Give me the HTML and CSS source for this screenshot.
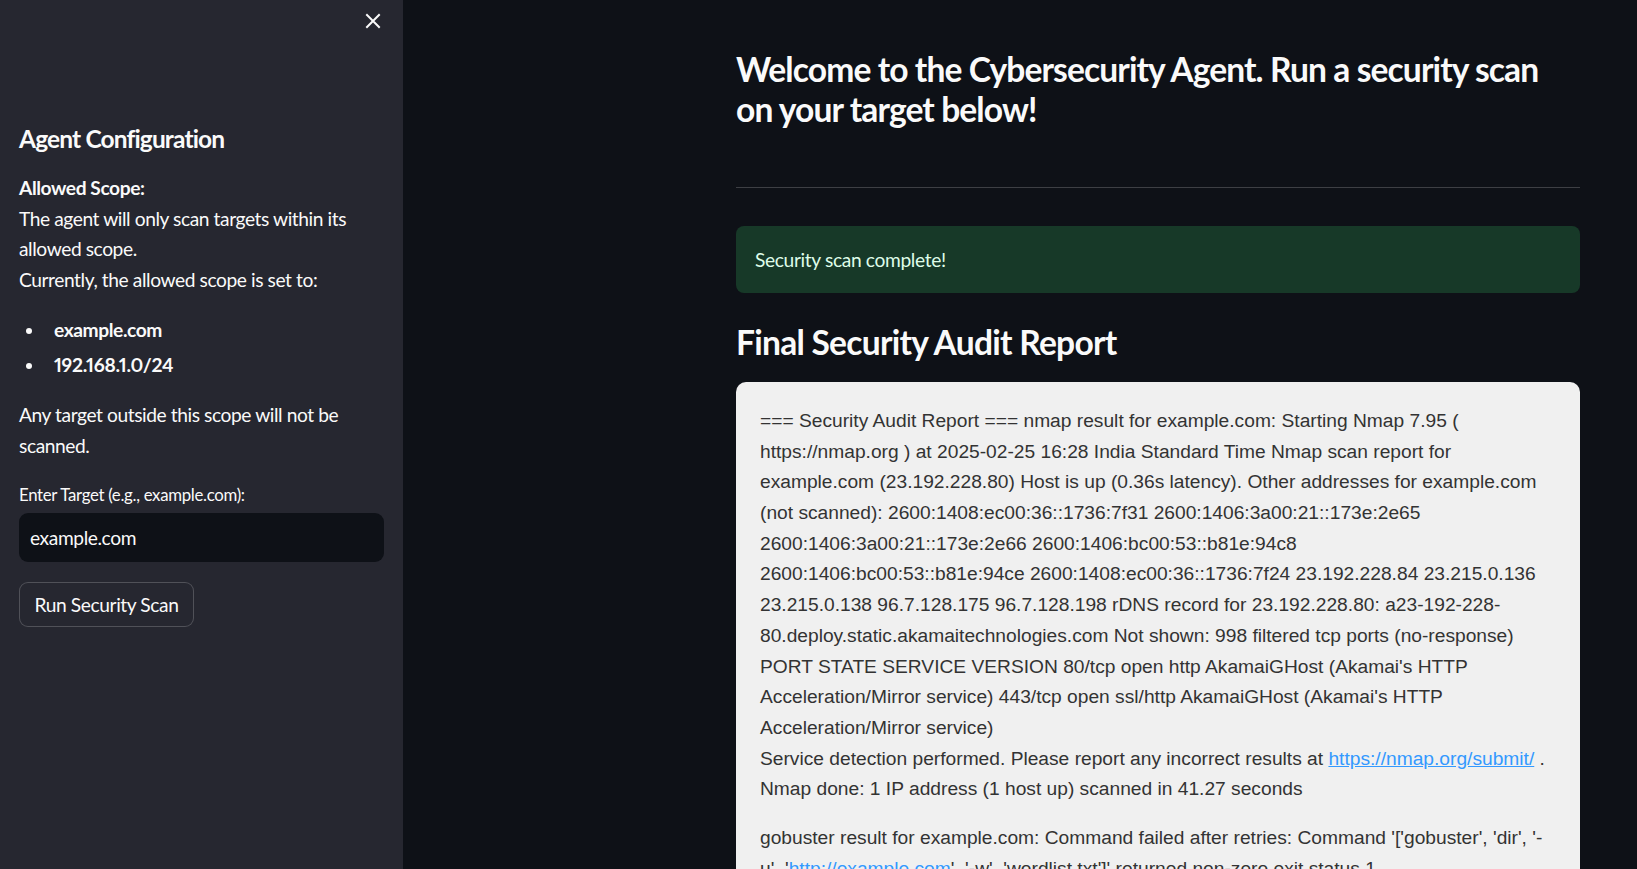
FILE: index.html
```html
<!DOCTYPE html>
<html lang="en">
<head>
<meta charset="utf-8">
<title>Cybersecurity Agent</title>
<link rel="stylesheet" href="styles.css">
</head>
<body>
<div class="app">
  <aside class="sidebar">
    <div class="sidebar-head">
      <button class="close-btn" aria-label="Close sidebar">
        <svg width="16" height="16" viewBox="0 0 16 16"><path d="M2 2 L14 14 M14 2 L2 14" stroke="#fafafa" stroke-width="2" stroke-linecap="square"/></svg>
      </button>
    </div>
    <div class="sidebar-body">
      <h2 class="side-title">Agent Configuration</h2>
      <p class="side-text"><strong>Allowed Scope:</strong><br>The agent will only scan targets within its allowed scope.<br>Currently, the allowed scope is set to:</p>
      <ul class="scope-list">
        <li><strong>example.com</strong></li>
        <li><strong class="num">192.168.1.0/24</strong></li>
      </ul>
      <p class="side-text">Any target outside this scope will not be scanned.</p>
      <label class="field-label" for="target">Enter Target (e.g., example.com):</label>
      <div class="input-wrap"><input id="target" class="text-input" type="text" value="example.com"></div>
      <button class="run-btn">Run Security Scan</button>
    </div>
  </aside>
  <main class="main">
    <div class="block">
      <h3 class="title">Welcome to the Cybersecurity Agent. Run a security scan on your target below!</h3>
      <hr class="divider">
      <div class="alert-success">Security scan complete!</div>
      <h3 class="report-title">Final Security Audit Report</h3>
      <div class="report">
        <p class="report-p">=== Security Audit Report === nmap result for example.com: Starting Nmap 7.95 ( https://nmap.org ) at 2025-02-25 16:28 India Standard Time Nmap scan report for example.com (23.192.228.80) Host is up (0.36s latency). Other addresses for example.com (not scanned): 2600:1408:ec00:36::1736:7f31 2600:1406:3a00:21::173e:2e65 2600:1406:3a00:21::173e:2e66 2600:1406:bc00:53::b81e:94c8 2600:1406:bc00:53::b81e:94ce 2600:1408:ec00:36::1736:7f24 23.192.228.84 23.215.0.136 23.215.0.138 96.7.128.175 96.7.128.198 rDNS record for 23.192.228.80: a23-192-228-80.deploy.static.akamaitechnologies.com Not shown: 998 filtered tcp ports (no-response) PORT STATE SERVICE VERSION 80/tcp open http AkamaiGHost (Akamai's HTTP Acceleration/Mirror service) 443/tcp open ssl/http AkamaiGHost (Akamai's HTTP Acceleration/Mirror service)<br>Service detection performed. Please report any incorrect results at <a href="#">https://nmap.org/submit/</a> .<br>Nmap done: 1 IP address (1 host up) scanned in 41.27 seconds</p>
        <p class="report-p">gobuster result for example.com: Command failed after retries: Command '['gobuster', 'dir', '-u', '<a href="#">http://example.com</a>', '-w', 'wordlist.txt']' returned non-zero exit status 1.</p>
        <p class="report-p">dirb result for example.com: Command failed after retries.</p>
      </div>
    </div>
  </main>
</div>
</body>
</html>
```
FILE: styles.css
```css
* { box-sizing: border-box; }
html, body {
  margin: 0;
  padding: 0;
  height: 100%;
  overflow: hidden;
  background: #0e1117;
}
body {
  font-family: "Lato", "Noto Sans", sans-serif;
  color: #fafafa;
  font-size: 19.2px;
  line-height: 1.6;
  letter-spacing: -0.42px;
  font-variant-numeric: proportional-nums;
}
.app {
  display: flex;
  height: 100vh;
}
.sidebar {
  width: 403px;
  flex: 0 0 403px;
  background: #262730;
  height: 100%;
}
.sidebar-head {
  display: flex;
  justify-content: flex-end;
  padding: 10px 19px 0 0;
  height: 42px;
}
.close-btn {
  background: none;
  border: 0;
  padding: 2px;
  width: 22px;
  height: 22px;
  display: flex;
  align-items: center;
  justify-content: center;
  cursor: pointer;
}
.sidebar-body {
  padding: 0 19px;
}
.side-title {
  margin: 82px 0 20px 0;
  font-size: 24.5px;
  font-weight: 700;
  line-height: 29px;
  letter-spacing: -0.85px;
}
.side-text {
  margin: 0 0 19.2px 0;
  line-height: 30.7px;
}
.side-text strong { font-weight: 700; }
.scope-list {
  margin: 0 0 19.2px 0;
  padding: 0 0 0 35px;
  list-style: none;
}
.scope-list li {
  position: relative;
  line-height: 30.7px;
  margin-bottom: 4.5px;
}
.scope-list li:last-child { margin-bottom: 0; }
.scope-list li::before {
  content: "";
  position: absolute;
  left: -28px;
  top: 13px;
  width: 6px;
  height: 6px;
  border-radius: 50%;
  background: #fafafa;
}
.num { letter-spacing: -0.3px; }
.field-label {
  display: block;
  font-size: 16.8px;
  line-height: 26px;
  margin: 20px 0 5px 0;
  letter-spacing: -0.3px;
}
.input-wrap {
  background: #0e1117;
  border-radius: 9px;
  height: 49px;
  display: flex;
  align-items: center;
  padding: 0 11px;
}
.text-input {
  background: transparent;
  border: 0;
  outline: none;
  color: #fafafa;
  font-family: inherit;
  font-size: 19.2px;
  letter-spacing: -0.4px;
  width: 100%;
  padding: 0;
}
.run-btn {
  margin-top: 20px;
  height: 45px;
  width: 175px;
  background: #262730;
  color: #fafafa;
  border: 1px solid rgba(250, 250, 250, 0.2);
  border-radius: 9px;
  font-family: inherit;
  font-size: 19.2px;
  letter-spacing: -0.4px;
  padding: 0;
  cursor: pointer;
}
.main {
  flex: 1;
  height: 100%;
  overflow: hidden;
}
.block {
  width: 844px;
  margin-left: 333px;
}
.title {
  margin: 49px 0 0 0;
  font-size: 33.6px;
  font-weight: 700;
  line-height: 40.3px;
  letter-spacing: -0.9px;
}
.divider {
  border: 0;
  border-top: 1px solid rgba(250, 250, 250, 0.2);
  margin: 57px 0 38px 0;
}
.alert-success {
  background: #173928;
  color: #dffde9;
  border-radius: 8px;
  height: 67px;
  padding: 2px 19px 0 19px;
  display: flex;
  align-items: center;
  letter-spacing: -0.35px;
}
.report-title {
  margin: 29px 0 0 0;
  font-size: 33.6px;
  font-weight: 700;
  line-height: 40.3px;
  letter-spacing: -0.75px;
}
.report {
  margin-top: 20px;
  background: #f0f0f0;
  border-radius: 10px;
  padding: 24px 24px;
  font-family: "Liberation Sans", Arial, sans-serif;
  color: #333333;
  font-size: 19.2px;
  line-height: 30.7px;
  letter-spacing: 0;
}
.report-p {
  margin: 0 0 18px 0;
}
.report a {
  color: #3399ff;
  text-decoration: underline;
}
```
